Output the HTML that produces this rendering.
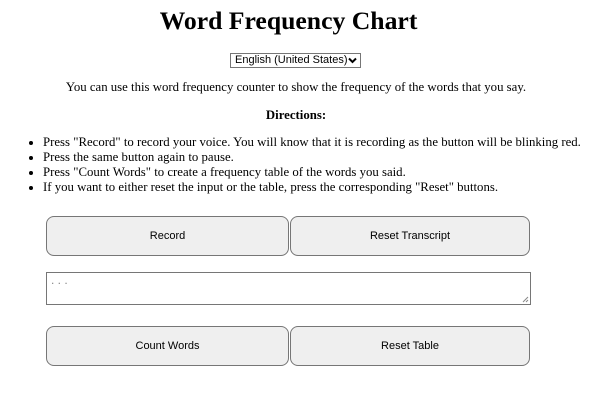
<!DOCTYPE html>
<html><head><style>
body{margin:0;width:608px;height:414px;background:#fff;font-family:"Liberation Serif",serif;font-size:12.8px;color:#000;position:relative;overflow:hidden}
h1{position:absolute;top:5px;left:0;width:577px;text-align:center;margin:0;font-size:25.7px;line-height:32px}
.sel{position:absolute;left:230px;top:53px;width:131px;height:15px;border:1px solid #767676;font:11px "Liberation Sans",sans-serif;line-height:13px;box-sizing:border-box;padding-left:4px}
.sel svg{position:absolute;right:3px;top:3px}
p{position:absolute;left:0;width:592px;text-align:center;margin:0;line-height:16px}
ul{position:absolute;left:0;top:135px;margin:0;padding-left:43px;line-height:15px}
.b{position:absolute;height:40px;border:1px solid #767676;border-radius:8px;background:#efefef;box-sizing:border-box;font:11px "Liberation Sans",sans-serif;display:flex;align-items:center;justify-content:center}
.ta{position:absolute;left:46px;top:272px;width:485px;height:33px;border:1px solid #767676;box-sizing:border-box;color:#888;font:12px "Liberation Sans",sans-serif;padding:2px 4px;line-height:10px}
</style></head><body>
<h1>Word Frequency Chart</h1>
<div class="sel">English (United States)<svg width="9" height="7" viewBox="0 0 9 7"><path d="M1 1.5L4.5 5L8 1.5" stroke="#000" stroke-width="2" fill="none"/></svg></div>
<p style="top:79px">You can use this word frequency counter to show the frequency of the words that you say.</p>
<p style="top:107px"><b>Directions:</b></p>
<ul>
<li>Press "Record" to record your voice. You will know that it is recording as the button will be blinking red.</li>
<li>Press the same button again to pause.</li>
<li>Press "Count Words" to create a frequency table of the words you said.</li>
<li>If you want to either reset the input or the table, press the corresponding "Reset" buttons.</li>
</ul>
<div class="b" style="left:46px;top:216px;width:243px">Record</div>
<div class="b" style="left:290px;top:216px;width:240px">Reset Transcript</div>
<div class="ta">. . .<svg style="position:absolute;right:1px;bottom:1px" width="7" height="7"><path d="M6 1L1 6M6 4L4 6" stroke="#888"/></svg></div>
<div class="b" style="left:46px;top:326px;width:243px">Count Words</div>
<div class="b" style="left:290px;top:326px;width:240px">Reset Table</div>
</body></html>
